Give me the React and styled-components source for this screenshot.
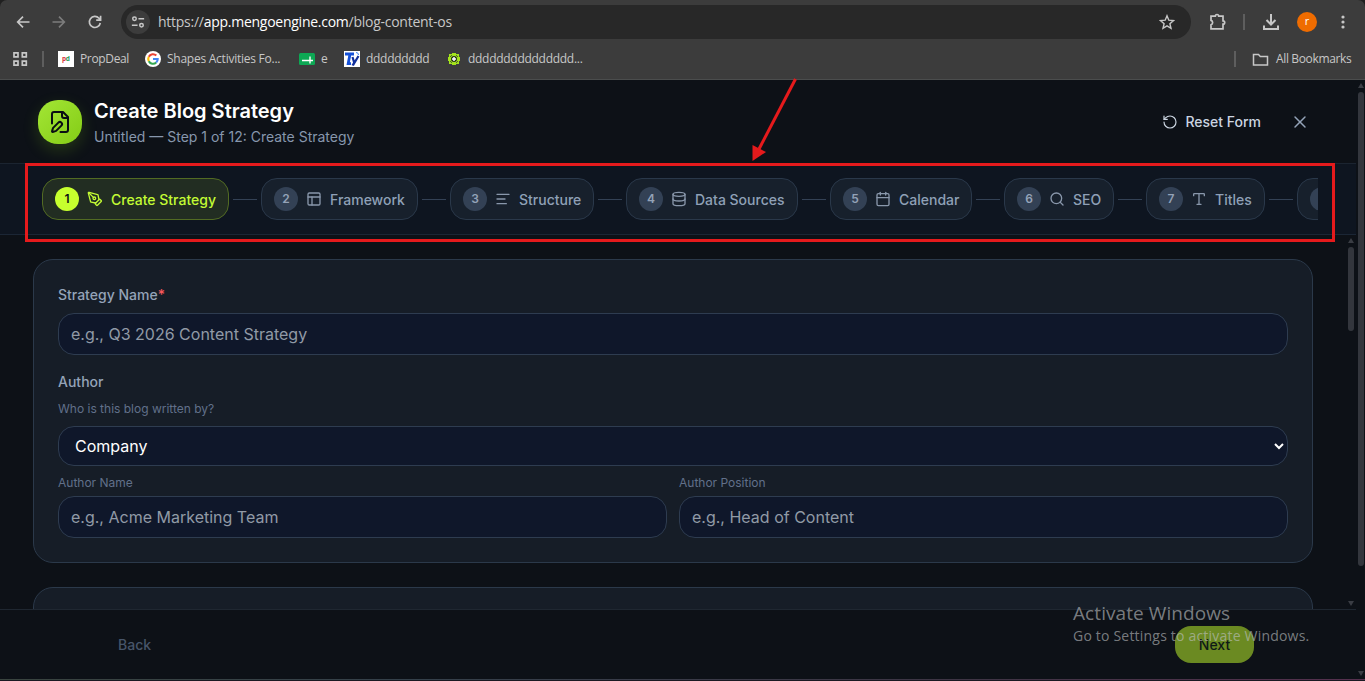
import React from "react";
import styled, { createGlobalStyle, css } from "styled-components";
import {
  RotateCcw,
  X,
  PenTool,
  PanelsTopLeft,
  TextAlignStart,
  Database,
  Calendar,
  Search,
  Type,
  Image,
} from "lucide-react";

const GlobalStyle = createGlobalStyle`
  * {
    box-sizing: border-box;
  }
  body {
    margin: 0;
    overflow: hidden;
    background: #202020;
    font-family: Inter, "Liberation Sans", sans-serif;
  }
`;

const Window = styled.div`
  position: relative;
  width: 1365px;
  height: 681px;
  display: flex;
  flex-direction: column;
  overflow: hidden;
`;

/* browser chrome */

const Chrome = styled.div`
  height: 80px;
  flex: none;
  background: #3c3c3c;
  border-bottom: 1px solid #4b4d4d;
  border-radius: 7px 7px 0 0;
  font-family: "Open Sans", "Noto Sans", sans-serif;
  color: #c7c7c7;
`;

const Toolbar = styled.div`
  height: 44px;
  display: flex;
  align-items: center;
  padding: 0 14px 0 15px;
`;

const NavIcon = styled.svg`
  width: ${({ $size }) => $size || 16}px;
  height: ${({ $size }) => $size || 16}px;
  flex: none;
  fill: none;
  stroke: ${({ $dim }) => ($dim ? "#7c7c7c" : "#c7c7c7")};
  stroke-width: 1.7;
  margin-right: ${({ $gap }) => $gap || 0}px;
`;

const UrlBar = styled.div`
  width: 1070px;
  height: 34px;
  display: flex;
  align-items: center;
  background: #282828;
  border-radius: 17px;
  padding: 0 16px 0 5px;
  margin-right: 18px;
`;

const SiteInfo = styled.div`
  width: 24px;
  height: 24px;
  border-radius: 50%;
  background: #3c3c3c;
  display: flex;
  align-items: center;
  justify-content: center;
  margin-right: 8px;
`;

const Url = styled.div`
  flex: 1;
  font-size: 14px;
  line-height: 20px;
  letter-spacing: -0.26px;
  color: #c7c7c7;
  span {
    color: #ffffff;
  }
`;

const Separator = styled.div`
  width: 2px;
  height: 16px;
  flex: none;
  background: #5e5e5e;
  margin-right: ${({ $gap }) => $gap}px;
`;

const Profile = styled.div`
  width: 20px;
  height: 20px;
  border-radius: 50%;
  background: #ef6c00;
  color: #fff;
  font-size: 11px;
  line-height: 18px;
  text-align: center;
  margin-right: 18px;
`;

const Bookmarks = styled.div`
  height: 30px;
  display: flex;
  align-items: center;
  padding: 0 14px 0 12px;
  font-size: 12px;
`;

const Bookmark = styled.div`
  display: flex;
  align-items: center;
  gap: ${({ $gap }) => $gap || 6}px;
  width: ${({ $width }) => $width}px;
  line-height: 16px;
  white-space: nowrap;
  letter-spacing: ${({ $spacing }) => $spacing || 0}px;
  svg {
    flex: none;
  }
`;

const Spacer = styled.div`
  flex: 1;
`;

/* app */

const Page = styled.div`
  flex: 1;
  display: flex;
  min-height: 0;
  background: #0d1117;
`;

const Main = styled.div`
  width: 1356px;
  flex: none;
  display: flex;
  flex-direction: column;
`;

const Header = styled.div`
  height: 84px;
  flex: none;
  display: flex;
  align-items: center;
  padding: 0 46px 0 38px;
  border-bottom: 1px solid #1b2430;
`;

const Logo = styled.div`
  width: 44px;
  height: 44px;
  border-radius: 20px;
  display: flex;
  align-items: center;
  justify-content: center;
  background: linear-gradient(135deg, #a3e635, #84cc16);
  box-shadow: 0 6px 16px rgba(132, 204, 22, 0.2);
  color: #0a0e14;
  margin-right: 12px;
`;

const Heading = styled.div`
  flex: 1;
`;

const Title = styled.h1`
  margin: 0;
  font-size: 20px;
  font-weight: 600;
  line-height: 28px;
  color: #fff;
`;

const Subtitle = styled.p`
  margin: 2px 0 0;
  font-size: 14px;
  line-height: 20px;
  color: #8797ad;
`;

const ResetButton = styled.button`
  display: flex;
  align-items: center;
  gap: 7px;
  padding: 0;
  border: none;
  background: transparent;
  font-family: inherit;
  font-size: 14px;
  font-weight: 500;
  color: #cbd5e1;
  margin-right: 29px;
`;

const CloseButton = styled.button`
  display: flex;
  padding: 0;
  border: none;
  background: transparent;
  color: #94a3b8;
`;

const Steps = styled.div`
  height: 71px;
  flex: none;
  padding: 0 38px 0 42px;
  background: #0e1520;
  border-bottom: 1px solid #1b2635;
`;

const StepTrack = styled.div`
  display: flex;
  align-items: center;
  height: 70px;
  overflow: hidden;
`;

const Step = styled.div`
  display: flex;
  align-items: center;
  flex: none;
  gap: 8px;
  height: 42px;
  width: ${({ $width }) => $width}px;
  padding: 0 12px;
  border: 1px solid #2a384a;
  border-radius: 16px;
  background: #17202c;
  color: #8fa0b7;
  font-size: 14px;
  font-weight: 500;
  line-height: 20px;
  white-space: nowrap;
  svg {
    flex: none;
    color: #8997ab;
  }
  ${({ $active }) =>
    $active &&
    css`
      border-color: #526b23;
      background: #222d22;
      color: #c3fb34;
      svg {
        color: #c3fb34;
      }
    `}
`;

const StepNumber = styled.div`
  width: 24px;
  height: 24px;
  flex: none;
  border-radius: 50%;
  background: ${({ $active }) => ($active ? "#c6ff2e" : "#334155")};
  color: ${({ $active }) => ($active ? "#0d1117" : "#94a3b8")};
  font-size: 12px;
  font-weight: 600;
  line-height: 24px;
  text-align: center;
`;

const StepLabel = styled.span`
  padding-top: 1px;
`;

const Connector = styled.div`
  width: 24px;
  height: 1px;
  flex: none;
  margin: 0 4px;
  background: #334155;
`;

const Body = styled.div`
  flex: 1;
  min-height: 0;
  display: flex;
`;

const Content = styled.div`
  flex: 1;
  display: flex;
  flex-direction: column;
  gap: 24px;
  padding: 24px 33px 0;
  overflow: hidden;
`;

const Card = styled.div`
  flex: none;
  height: ${({ $height }) => $height}px;
  padding: 25px 24px 24px;
  border: 1px solid #2b394a;
  border-radius: 20px;
  background: #161d27;
`;

const Label = styled.label`
  display: block;
  font-size: 14px;
  font-weight: 500;
  line-height: 20px;
  color: #94a3b8;
  margin-bottom: 8px;
  span {
    color: #f8585c;
  }
`;

const Hint = styled.div`
  font-size: 12px;
  line-height: 16px;
  color: #61708a;
  padding-top: ${({ $top }) => $top || 0}px;
  margin-bottom: ${({ $gap }) => $gap}px;
`;

const field = css`
  display: block;
  width: 100%;
  border: 1px solid #2e3c50;
  border-radius: 16px;
  background: #0f172a;
  font-family: inherit;
  font-size: 16px;
  outline: none;
`;

const Input = styled.input`
  ${field}
  height: 42px;
  padding: 0 12px;
  margin-bottom: ${({ $gap }) => $gap || 0}px;
  color: #fff;
  &::placeholder {
    color: #919aa6;
  }
`;

const Select = styled.select`
  ${field}
  height: 40px;
  padding: 0 0 0 12px;
  margin-bottom: 9px;
  color: #fff;
`;

const Columns = styled.div`
  display: grid;
  grid-template-columns: 1fr 1fr;
  gap: 12px;
`;

const Footer = styled.div`
  height: 70px;
  flex: none;
  display: flex;
  align-items: flex-start;
  justify-content: space-between;
  padding: 16px 102px 0 118px;
  border-top: 1px solid #1f2731;
`;

const BackButton = styled.button`
  height: 37px;
  padding: 0;
  border: none;
  background: transparent;
  font-family: inherit;
  font-size: 14px;
  font-weight: 500;
  color: #475569;
`;

const NextButton = styled.button`
  width: 79px;
  height: 37px;
  border: none;
  border-radius: 16px;
  background: #6b8a22;
  color: #0f1a17;
  font-family: inherit;
  font-size: 14px;
  font-weight: 500;
`;

const Scrollbar = styled.div`
  width: ${({ $width }) => $width}px;
  flex: none;
  display: flex;
  flex-direction: column;
  align-items: center;
  padding: 3px 0;
`;

const Arrow = styled.div`
  width: 0;
  height: 0;
  border-left: 3px solid transparent;
  border-right: 3px solid transparent;
  border-${({ $up }) => ($up ? "bottom" : "top")}: 5px solid #3a3d44;
`;

const Thumb = styled.div`
  width: 6px;
  height: ${({ $height }) => $height}px;
  margin: 4px 0 auto;
  border-radius: 3px;
  background: #33363d;
`;

const BottomEdge = styled.div`
  height: 2px;
  flex: none;
  background: linear-gradient(90deg, #39443f, #34404a 30%, #3d3444 70%, #55304e);
  border-bottom: 1px solid #1a1a22;
`;

/* overlays */

const Marker = styled.div`
  position: absolute;
  left: 25px;
  top: 163px;
  width: 1310px;
  height: 79px;
  border: 3px solid #e51a1c;
`;

const MarkerArrow = styled.svg`
  position: absolute;
  left: 740px;
  top: 70px;
`;

const Watermark = styled.div`
  position: absolute;
  left: 1073px;
  top: 601px;
  font-family: "Open Sans", "Noto Sans", sans-serif;
  color: rgba(190, 192, 194, 0.62);
  white-space: nowrap;
`;

const WatermarkTitle = styled.div`
  font-size: 19px;
  line-height: 25px;
  letter-spacing: 0.08px;
`;

const WatermarkText = styled.div`
  font-size: 14px;
  line-height: 19px;
  letter-spacing: 0.2px;
`;

const steps = [
  { label: "Create Strategy", icon: PenTool, width: 187 },
  { label: "Framework", icon: PanelsTopLeft, width: 157 },
  { label: "Structure", icon: TextAlignStart, width: 144 },
  { label: "Data Sources", icon: Database, width: 172 },
  { label: "Calendar", icon: Calendar, width: 142 },
  { label: "SEO", icon: Search, width: 110 },
  { label: "Titles", icon: Type, width: 119 },
  { label: "", icon: Image, width: 130 },
];

const BrowserBar = () => (
  <Chrome>
    <Toolbar>
      <NavIcon viewBox="0 0 16 16" $gap={20}>
        <path d="M14.5 8H3M8 2.7 2.7 8 8 13.3" />
      </NavIcon>
      <NavIcon viewBox="0 0 16 16" $gap={20} $dim>
        <path d="M1.5 8H13M8 2.7 13.3 8 8 13.3" />
      </NavIcon>
      <NavIcon viewBox="0 0 16 16" $gap={18}>
        <path d="M13.3 9A5.5 5.5 0 1 1 12 4.3l1.3 1.4M13.6 1.8v4.4H9.2" />
      </NavIcon>
      <UrlBar>
        <SiteInfo>
          <NavIcon viewBox="0 0 16 16" $size={14}>
            <circle cx="4" cy="4.2" r="2" />
            <path d="M8.5 4.2H15M1 11.8h6.5" />
            <circle cx="12" cy="11.8" r="2" />
          </NavIcon>
        </SiteInfo>
        <Url>
          https://<span>app.mengoengine.com</span>/blog-content-os
        </Url>
        <NavIcon viewBox="0 0 16 16">
          <path strokeWidth="1.4" d="m8 1.8 1.8 4.4 4.7.4-3.6 3.1 1.1 4.6L8 11.8l-4 2.5 1.1-4.6-3.6-3.1 4.7-.4z" />
        </NavIcon>
      </UrlBar>
      <NavIcon viewBox="0 0 18 18" $size={18} $gap={16}>
        <path d="M2 3.2h4.3a1.7 1.7 0 0 1 3.4 0H14v4.6a1.7 1.7 0 0 1 0 3.4v4.6H2v-4a2.3 2.3 0 0 0 0-4.4z" />
      </NavIcon>
      <Separator $gap={17} />
      <NavIcon viewBox="0 0 18 18" $size={18} $gap={17}>
        <path strokeWidth="2" d="M9 1v10M4.5 7 9 11.5 13.5 7M2 12.5V16h14v-3.5" />
      </NavIcon>
      <Profile>r</Profile>
      <NavIcon viewBox="0 0 16 16">
        <g fill="#c7c7c7" stroke="none">
          <circle cx="8" cy="3" r="1.6" />
          <circle cx="8" cy="8" r="1.6" />
          <circle cx="8" cy="13" r="1.6" />
        </g>
      </NavIcon>
    </Toolbar>
    <Bookmarks>
      <NavIcon viewBox="0 0 16 16" $gap={14}>
        <path d="M2 1.8h4v4H2zM10.3 1.8h4v4h-4zM2 10.2h4v4H2zM10.3 10.2h4v4h-4z" />
      </NavIcon>
      <Separator $gap={14} />
      <Bookmark $width={87} $spacing={-0.35}>
        <svg width="16" height="16">
          <rect width="16" height="16" fill="#fff" />
          <text x="4" y="9.5" fontSize="6.5" fontWeight="700" fill="#d8323c">
            p<tspan fill="#1f9a55">d</tspan>
          </text>
        </svg>
        PropDeal
      </Bookmark>
      <Bookmark $width={154} $spacing={-0.25}>
        <svg width="16" height="16" viewBox="0 0 16 16" fill="none" strokeWidth="2.1">
          <circle cx="8" cy="8" r="8" fill="#fff" />
          <path d="M11.3 4.6A4.7 4.7 0 0 0 3.8 5.8" stroke="#ea4335" />
          <path d="M3.8 5.8a4.7 4.7 0 0 0 0 4.4" stroke="#fbbc05" />
          <path d="M3.8 10.2a4.7 4.7 0 0 0 7.4 1.3" stroke="#34a853" />
          <path d="M11.2 11.5A4.7 4.7 0 0 0 12.7 8H8" stroke="#4285f4" />
        </svg>
        Shapes Activities Fo...
      </Bookmark>
      <Bookmark $width={45}>
        <svg width="16" height="12">
          <rect width="16" height="12" rx="1.5" fill="#0da854" />
          <path d="M3 7.5h11M11 3.5v7" stroke="#fff" strokeWidth="1.4" />
        </svg>
        e
      </Bookmark>
      <Bookmark $width={102} $spacing={-0.3}>
        <svg width="16" height="16" fill="none">
          <rect width="16" height="16" fill="#fff" />
          <path d="M1 3h9M6 3 4.2 12.6H7" stroke="#1450d8" strokeWidth="2.8" />
          <path d="m8.5 6 1.8 6 4.2-7M10.6 11l-2.1 3.5" stroke="#12309c" strokeWidth="2.2" />
          <path d="M12 1.5q2.5 0 2.5 2.5" stroke="#3f83f0" />
        </svg>
        ddddddddd
      </Bookmark>
      <Bookmark $width={140} $spacing={-0.28}>
        <svg width="16" height="16" fill="none">
          <path d="M3 3h3V2h4v1h3v3h1v4h-1v3h-3v1H6v-1H3v-3H2V6h1z" fill="#a3e31c" />
          <circle cx="8" cy="8" r="3" fill="#27331a" />
          <path d="m4 6 2-2M12 6l-2-2M4 10l2 2M12 10l-2 2" stroke="#3c3c3c" strokeWidth=".8" />
          <path d="M8 6v4M6 8h4" stroke="#fff" strokeWidth="1.5" />
        </svg>
        ddddddddddddddd...
      </Bookmark>
      <Spacer />
      <Separator $gap={16} />
      <Bookmark $width={99} $gap={7} $spacing={-0.36}>
        <NavIcon viewBox="0 0 17 16" $size={17}>
          <path strokeWidth="1.5" d="M1.5 3h5l1.8 2h7.2v8.5h-14z" />
        </NavIcon>
        All Bookmarks
      </Bookmark>
    </Bookmarks>
  </Chrome>
);

const FilePenIcon = () => (
  <svg
    width="24"
    height="24"
    viewBox="0 0 24 24"
    fill="none"
    stroke="currentColor"
    strokeWidth="2"
    strokeLinecap="round"
    strokeLinejoin="round"
  >
    <path d="M12.5 22H18a2 2 0 0 0 2-2V7l-5-5H6a2 2 0 0 0-2 2v9.5" />
    <path d="M14 2v4a2 2 0 0 0 2 2h4" />
    <path d="M13.378 15.626a1 1 0 1 0-3.004-3.004l-5.01 5.012a2 2 0 0 0-.506.854l-.837 2.87a.5.5 0 0 0 .62.62l2.87-.837a2 2 0 0 0 .854-.506z" />
  </svg>
);

const App = () => {
  return (
    <>
      <GlobalStyle />
      <Window>
        <BrowserBar />
        <Page>
          <Main>
            <Header>
              <Logo>
                <FilePenIcon />
              </Logo>
              <Heading>
                <Title>Create Blog Strategy</Title>
                <Subtitle>Untitled — Step 1 of 12: Create Strategy</Subtitle>
              </Heading>
              <ResetButton>
                <RotateCcw size={16} strokeWidth={1.75} />
                Reset Form
              </ResetButton>
              <CloseButton>
                <X size={20} strokeWidth={1.75} />
              </CloseButton>
            </Header>
            <Steps>
              <StepTrack>
                {steps.map(({ label, icon: Icon, width }, i) => (
                  <React.Fragment key={i}>
                    {i > 0 && <Connector />}
                    <Step $active={i === 0} $width={width}>
                      <StepNumber $active={i === 0}>{i < 7 && i + 1}</StepNumber>
                      <Icon size={16} />
                      <StepLabel>{label}</StepLabel>
                    </Step>
                  </React.Fragment>
                ))}
              </StepTrack>
            </Steps>
            <Body>
              <Content>
                <Card $height={304}>
                  <Label>
                    Strategy Name<span>*</span>
                  </Label>
                  <Input placeholder="e.g., Q3 2026 Content Strategy" $gap={17} />
                  <Label>Author</Label>
                  <Hint $top={1} $gap={9}>
                    Who is this blog written by?
                  </Hint>
                  <Select defaultValue="Company">
                    <option>Company</option>
                  </Select>
                  <Columns>
                    <div>
                      <Hint $gap={5}>Author Name</Hint>
                      <Input placeholder="e.g., Acme Marketing Team" />
                    </div>
                    <div>
                      <Hint $gap={5}>Author Position</Hint>
                      <Input placeholder="e.g., Head of Content" />
                    </div>
                  </Columns>
                </Card>
                <Card $height={200} />
              </Content>
              <Scrollbar $width={10}>
                <Arrow $up />
                <Thumb $height={84} />
                <Arrow />
              </Scrollbar>
            </Body>
            <Footer>
              <BackButton>Back</BackButton>
              <NextButton>Next</NextButton>
            </Footer>
          </Main>
          <Scrollbar $width={10}>
            <Arrow $up />
            <Thumb $height={474} />
            <Arrow />
          </Scrollbar>
        </Page>
        <BottomEdge />
        <Marker />
        <MarkerArrow width="70" height="95">
          <path d="M55.5 9 19 79" stroke="#e51a1c" strokeWidth="3" />
          <path d="M12.5 91V75L26 82z" fill="#e51a1c" />
        </MarkerArrow>
        <Watermark>
          <WatermarkTitle>Activate Windows</WatermarkTitle>
          <WatermarkText>Go to Settings to activate Windows.</WatermarkText>
        </Watermark>
      </Window>
    </>
  );
};

export default App;
